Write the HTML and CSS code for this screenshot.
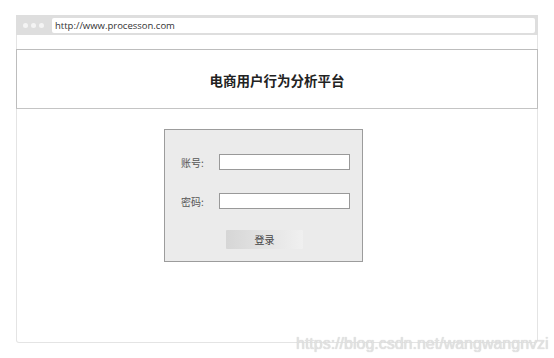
FILE: index.html
```html
<!DOCTYPE html>
<html>
<head>
  <meta charset="utf-8">
  <title>电商用户行为分析平台</title>
  <link rel="stylesheet" href="styles.css">
</head>
<body>
  <div class="browser">
    <div class="toolbar">
      <div class="dots"><span></span><span></span><span></span></div>
      <div class="address">http://www.processon.com</div>
    </div>
    <div class="spacer"></div>
    <div class="header">电商用户行为分析平台</div>
    <div class="main">
      <form class="login">
        <label>账号:</label>
        <input type="text">
        <label>密码:</label>
        <input type="password">
        <button type="button">登录</button>
      </form>
    </div>
  </div>
  <div class="watermark">https://blog.csdn.net/wangwangnvzi</div>
</body>
</html>
```

FILE: styles.css
```css
body {
  margin: 0;
  background: #fff;
  font-family: "Noto Sans CJK SC", "Liberation Sans", sans-serif;
  color: #333;
}
.browser {
  margin: 15px 0 0 16px;
  width: 522px;
  height: 328px;
  box-sizing: border-box;
  border: 1px solid #e4e4e4;
  border-top: none;
  border-radius: 0 0 3px 3px;
}
.toolbar {
  height: 20px;
  margin: 0 -1px;
  background: #dedede;
  display: flex;
  align-items: center;
}
.dots {
  display: flex;
  gap: 3px;
  padding: 0 0 0 7px;
  width: 29px;
}
.dots span {
  width: 5px;
  height: 5px;
  border-radius: 50%;
  background: #f4f4f4;
}
.address {
  flex: 1;
  margin: 0 3px 0 0;
  height: 15px;
  line-height: 15px;
  background: #fff;
  border-radius: 2px;
  padding-left: 3px;
  font-family: "Open Sans", "Liberation Sans", sans-serif;
  font-size: 9.5px;
  color: #333;
}
.spacer {
  height: 14px;
}
.header {
  height: 60px;
  margin: 0 -1px;
  box-sizing: border-box;
  border: 1px solid #bdbdbd;
  border-bottom-color: #c4c4c4;
  display: flex;
  align-items: center;
  justify-content: center;
  padding-top: 1px;
  font-size: 13.5px;
  font-weight: bold;
  color: #222;
}
.main {
  padding: 20px 0 0 147px;
}
.login {
  margin: 0;
  width: 199px;
  height: 133px;
  box-sizing: border-box;
  border: 1px solid #9c9c9c;
  background: #ebebeb;
  display: grid;
  grid-template-columns: 38px 131px;
  grid-template-rows: 16px 16px 19px;
  row-gap: 23px;
  align-content: start;
  align-items: center;
  padding: 24px 0 0 16px;
}
.login label {
  font-size: 10px;
  color: #555;
}
.login input {
  margin: 0;
  padding: 0;
  height: 16px;
  box-sizing: border-box;
  border: 1px solid #999;
  background: #fff;
}
.login button {
  grid-column: 2;
  margin: -4px 0 0 7px;
  width: 77px;
  height: 19px;
  border: none;
  border-radius: 1px;
  background: linear-gradient(to right, #d6d6d6, #f0f0f0);
  font-family: "Noto Sans CJK SC", sans-serif;
  font-size: 10px;
  color: #444;
  padding: 0;
}
.watermark {
  position: absolute;
  left: 296px;
  top: 335px;
  font-family: "Liberation Sans", sans-serif;
  font-size: 16px;
  color: #e2e2e2;
  text-shadow: 0 0 1px #c8c8c8;
}
```
